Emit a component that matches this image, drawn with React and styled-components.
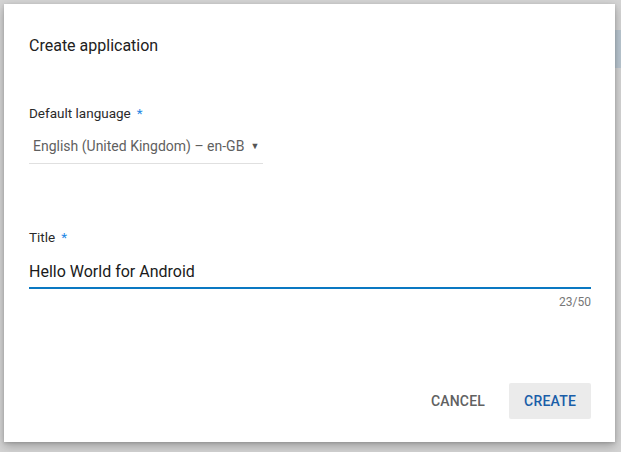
import React from "react";
import styled, { createGlobalStyle } from "styled-components";

const Global = createGlobalStyle`
  html, body { margin: 0; padding: 0; }
  body { font-family: Roboto, "Noto Sans", sans-serif; background: #d6d6d6; }
`;

const Backdrop = styled.div`
  width: 621px;
  height: 452px;
  background: #d4d4d4;
  padding: 4px 6px 10px 4px;
  box-sizing: border-box;
  position: relative;
  overflow: hidden;
`;

const Ghost = styled.div`
  position: absolute;
  right: 0;
  top: 30px;
  width: 10px;
  height: 38px;
  background: #b9c6d0;
`;

const Dialog = styled.div`
  position: relative;
  width: 611px;
  height: 438px;
  background: #fff;
  box-shadow: 0 4px 10px rgba(0, 0, 0, 0.25), 0 1px 3px rgba(0, 0, 0, 0.15);
  box-sizing: border-box;
  padding: 0 24px 0 25px;
  display: flex;
  flex-direction: column;
`;

const Heading = styled.h2`
  margin: 29px 0 0;
  font-size: 16px;
  font-weight: 400;
  line-height: 26px;
  color: #212121;
`;

const Field = styled.div`
  display: flex;
  flex-direction: column;
  margin-top: ${(p) => p.$top}px;
  width: ${(p) => p.$width || "100%"};
`;

const Label = styled.label`
  font-size: 13.5px;
  line-height: 18px;
  color: #2a2a2a;
`;

const Star = styled.span`
  color: #1e88e5;
  margin-left: 6px;
`;

const Select = styled.div`
  display: flex;
  align-items: center;
  gap: 6px;
  padding: 8px 4px;
  font-size: 14px;
  line-height: 18px;
  color: #5f5f5f;
  white-space: nowrap;
  border-bottom: 1px solid #e0e0e0;
  margin-top: 7px;
`;

const Caret = styled.span`
  font-size: 9px;
  color: #555;
`;

const Input = styled.div`
  margin-top: 15px;
  font-size: 16px;
  line-height: 22px;
  color: #1a1a1a;
  padding-bottom: 4px;
  border-bottom: 2px solid #0a78c2;
`;

const Counter = styled.div`
  align-self: flex-end;
  margin-top: 6px;
  font-size: 12px;
  line-height: 14px;
  color: #777;
`;

const Actions = styled.div`
  margin-top: auto;
  margin-bottom: 23px;
  display: flex;
  justify-content: flex-end;
  align-items: center;
  gap: 12px;
`;

const Button = styled.button`
  border: none;
  border-radius: 2px;
  background: ${(p) => (p.$primary ? "#ebebeb" : "transparent")};
  color: ${(p) => (p.$primary ? "#1a5ea8" : "#616161")};
  font-family: Roboto, sans-serif;
  font-size: 14px;
  font-weight: 500;
  letter-spacing: 0.2px;
  height: 36px;
  padding: 0 ${(p) => (p.$primary ? 15 : 12)}px;
  cursor: pointer;
`;

export default function App() {
  return (
    <>
      <Global />
      <Backdrop>
        <Ghost />
        <Dialog>
          <Heading>Create application</Heading>
          <Field $top={45} $width="234px">
            <Label>
              Default language<Star>*</Star>
            </Label>
            <Select>
              English (United Kingdom) – en-GB <Caret>▼</Caret>
            </Select>
          </Field>
          <Field $top={64}>
            <Label>
              Title<Star>*</Star>
            </Label>
            <Input>Hello World for Android</Input>
            <Counter>23/50</Counter>
          </Field>
          <Actions>
            <Button>CANCEL</Button>
            <Button $primary>CREATE</Button>
          </Actions>
        </Dialog>
      </Backdrop>
    </>
  );
}
